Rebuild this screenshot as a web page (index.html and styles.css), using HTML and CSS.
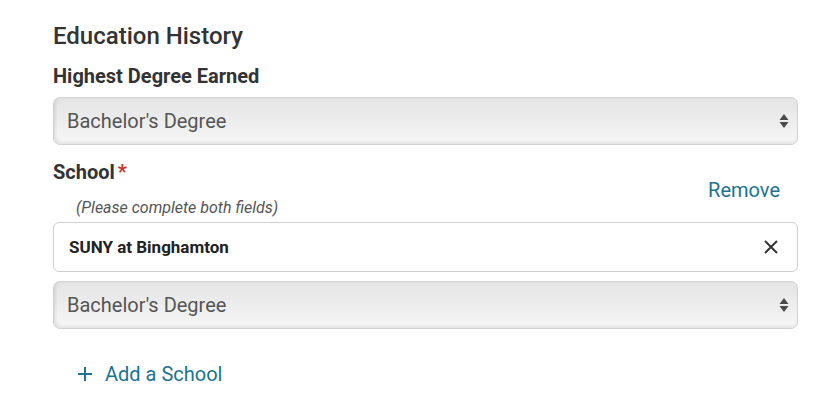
FILE: index.html
```html
<!DOCTYPE html>
<html>
<head>
<meta charset="utf-8">
<link rel="stylesheet" href="styles.css">
</head>
<body>
<div class="form">
  <h2 class="title">Education History</h2>
  <div class="label">Highest Degree Earned</div>
  <div class="select">
    <span class="select-text">Bachelor's Degree</span>
    <svg class="arrows" width="10" height="16" viewBox="0 0 10 16"><path d="M5 1 L9.5 7 L0.5 7 Z M5 15 L9.5 9 L0.5 9 Z" fill="#4a4a4a"/></svg>
  </div>
  <div class="school-head">
    <div class="label school-label">School<span class="req">*</span></div>
    <a class="remove">Remove</a>
  </div>
  <div class="hint">(Please complete both fields)</div>
  <div class="input">
    <span class="input-text">SUNY at Binghamton</span>
    <svg class="clear" width="16" height="16" viewBox="0 0 16 16"><path d="M2 2 L14 14 M14 2 L2 14" stroke="#333" stroke-width="2" fill="none"/></svg>
  </div>
  <div class="select second">
    <span class="select-text">Bachelor's Degree</span>
    <svg class="arrows" width="10" height="16" viewBox="0 0 10 16"><path d="M5 1 L9.5 7 L0.5 7 Z M5 15 L9.5 9 L0.5 9 Z" fill="#4a4a4a"/></svg>
  </div>
  <a class="add"><svg class="plus" width="16" height="16" viewBox="0 0 16 16"><path d="M8 1 V15 M1 8 H15" stroke="#1c7393" stroke-width="2" fill="none"/></svg>Add a School</a>
</div>
</body>
</html>
```

FILE: styles.css
```css
html, body {
  margin: 0;
  padding: 0;
  background: #fff;
}
body {
  font-family: Roboto, "Liberation Sans", sans-serif;
  color: #333;
}
.form {
  width: 745px;
  padding: 20px 0 0 53px;
  display: flex;
  flex-direction: column;
}
.title {
  margin: 0;
  font-size: 24px;
  font-weight: 500;
  line-height: 32px;
  color: #333;
}
.label {
  font-size: 20px;
  font-weight: 700;
  line-height: 26px;
  color: #333;
}
.title + .label {
  margin-top: 11px;
}
.select {
  margin-top: 8px;
  height: 48px;
  box-sizing: border-box;
  border-radius: 7px;
  border: 1px solid #d0d0d0;
  background: linear-gradient(#e4e4e4, #f6f6f6);
  box-shadow: inset 2px -2px 3px rgba(0,0,0,0.08);
  display: flex;
  align-items: center;
  justify-content: space-between;
  padding: 0 8px 0 13px;
}
.select-text {
  font-size: 20px;
  color: #555;
}
.school-head {
  margin-top: 14px;
  display: flex;
  justify-content: space-between;
  align-items: flex-start;
}
.req {
  color: #c9341e;
  margin-left: 3px;
}
.remove {
  font-size: 20px;
  color: #1c7393;
  margin-top: 18px;
  margin-right: 18px;
  line-height: 26px;
}
.hint {
  margin-top: -5px;
  padding-left: 23px;
  font-size: 16px;
  font-style: italic;
  color: #555;
  line-height: 20px;
}
.input {
  margin-top: 4px;
  height: 50px;
  box-sizing: border-box;
  border: 1px solid #cfcfcf;
  border-radius: 6px;
  background: #fff;
  display: flex;
  align-items: center;
  justify-content: space-between;
  padding: 0 18px 0 15px;
}
.input-text {
  font-size: 17px;
  font-weight: 700;
  color: #222;
}
.select.second {
  margin-top: 9px;
}
.add {
  margin-top: 33px;
  margin-left: 24px;
  display: flex;
  align-items: center;
  font-size: 20px;
  color: #1c7393;
  line-height: 24px;
}
.plus {
  margin-right: 12px;
}
```
